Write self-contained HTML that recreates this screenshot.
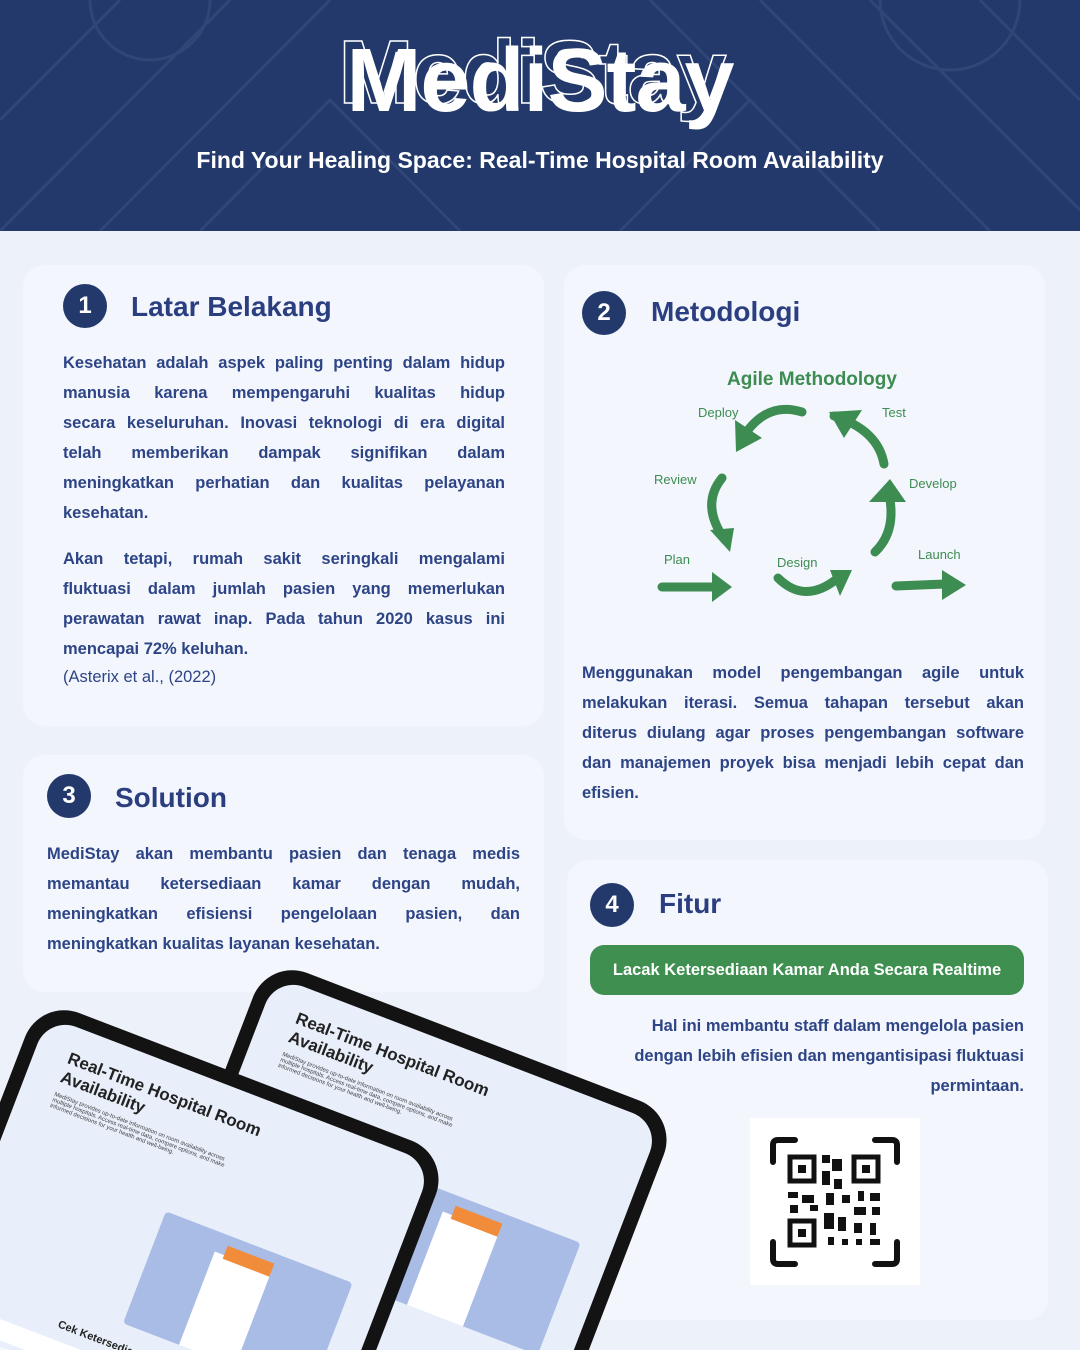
<!DOCTYPE html>
<html><head><meta charset="utf-8"><style>
*{margin:0;padding:0;box-sizing:border-box}
html,body{width:1080px;height:1350px;overflow:hidden}
body{background:#edf2fa;font-family:"Liberation Sans",sans-serif;color:#2b3f80}
#w{position:relative;width:1080px;height:1350px;overflow:hidden}
.hdr{position:absolute;left:0;top:0;width:1080px;height:231px;background:#23396b;overflow:hidden}
.title{position:absolute;left:0;width:1080px;text-align:center;top:30px;font-size:90px;font-weight:700;color:#fff;letter-spacing:-1px}
.title2{position:absolute;left:-8px;width:1080px;text-align:center;top:22px;font-size:90px;font-weight:700;color:transparent;-webkit-text-stroke:1.5px #fff;letter-spacing:-1px}
.sub{position:absolute;left:0;width:1080px;text-align:center;top:147px;font-size:23px;font-weight:700;color:#fff}
.card{position:absolute;background:#f3f6fc;border-radius:22px}
.num{position:absolute;width:44px;height:44px;border-radius:50%;background:#23396b;color:#fff;font-weight:700;font-size:24px;text-align:center;line-height:44px}
.h{position:absolute;font-size:28px;font-weight:700;color:#2b3f80}
.p{position:absolute;font-size:16.5px;line-height:30px;font-weight:700;color:#2d4486}
.p div{text-align:justify;text-align-last:justify;white-space:nowrap;word-spacing:0}
.p div.e{text-align-last:left}
.p.r div{text-align-last:right;text-align:right}
.tab{position:absolute;transform-origin:0 0;transform:rotate(21deg);width:440px;height:620px;background:#131313;border-radius:42px;padding:14px}
.scr{width:100%;height:100%;border-radius:30px;background:linear-gradient(#e9effa 0,#e9effa 55%,#f4f7fd 55%);overflow:hidden;position:relative}
</style></head><body><div id="w">
<div class="hdr">
<svg width="1080" height="231" style="position:absolute;left:0;top:0" fill="none" stroke="#2f4677" stroke-width="3">
<path d="M0 120 L120 0 M0 231 L230 0 M100 231 L330 0 M650 0 L880 231 M760 0 L990 231 M870 0 L1080 210 M980 0 L1080 100"/>
<path d="M200 231 L330 100 L460 231 M620 231 L750 100 L880 231"/>
<circle cx="150" cy="0" r="60"/><circle cx="950" cy="0" r="70"/>
</svg>
<div class="title2">MediStay</div>
<div class="title">MediStay</div>
<div class="sub">Find Your Healing Space: Real-Time Hospital Room Availability</div>
</div>

<div class="card" style="left:23px;top:265px;width:521px;height:461px"></div>
<div class="num" style="left:63px;top:284px">1</div>
<div class="h" style="left:131px;top:291px">Latar Belakang</div>
<div class="p" style="left:63px;top:348px;width:442px">
<div>Kesehatan adalah aspek paling penting dalam hidup</div>
<div>manusia karena mempengaruhi kualitas hidup</div>
<div>secara keseluruhan. Inovasi teknologi di era digital</div>
<div>telah memberikan dampak signifikan dalam</div>
<div>meningkatkan perhatian dan kualitas pelayanan</div>
<div class="e">kesehatan.</div></div>
<div class="p" style="left:63px;top:544px;width:442px">
<div>Akan tetapi, rumah sakit seringkali mengalami</div>
<div>fluktuasi dalam jumlah pasien yang memerlukan</div>
<div>perawatan rawat inap. Pada tahun 2020 kasus ini</div>
<div class="e">mencapai 72% keluhan.</div></div>
<div class="p" style="left:63px;top:662px;font-weight:400">(Asterix et al., (2022)</div>

<div class="card" style="left:564px;top:265px;width:481px;height:575px"></div>
<div class="num" style="left:582px;top:291px">2</div>
<div class="h" style="left:651px;top:296px">Metodologi</div>
<svg width="340" height="260" style="position:absolute;left:640px;top:360px" font-family="Liberation Sans" font-weight="700" fill="#3d8c52">
<text x="172" y="25" font-size="19" text-anchor="middle">Agile Methodology</text>
<g font-size="13" font-weight="400"><text x="58" y="57">Deploy</text><text x="242" y="57">Test</text><text x="14" y="124">Review</text><text x="269" y="128">Develop</text><text x="24" y="204">Plan</text><text x="137" y="207">Design</text><text x="278" y="199">Launch</text></g>
<g stroke="#3d8c52" stroke-width="9" fill="none" stroke-linecap="round">
<path d="M162 52 Q130 42 108 70"/><path d="M194 56 Q238 70 244 104"/><path d="M82 118 Q60 145 85 180"/><path d="M248 130 Q258 170 235 192"/><path d="M22 227 L75 227"/><path d="M138 218 Q165 245 198 218"/><path d="M256 226 L305 224"/>
</g>
<g fill="#3d8c52"><path d="M95 60 L122 78 L96 92Z"/><path d="M189 52 L222 50 L204 78Z"/><path d="M70 170 L94 168 L90 192Z"/><path d="M256 127 L235 150 L272 150Z" transform="translate(-6,-8)"/><path d="M72 212 L92 227 L72 242Z"/><path d="M190 210 L212 210 L200 236Z"/><path d="M302 210 L326 225 L302 240Z"/></g>
</svg>
<div class="p" style="left:582px;top:658px;width:442px">
<div>Menggunakan model pengembangan agile untuk</div>
<div>melakukan iterasi. Semua tahapan tersebut akan</div>
<div>diterus diulang agar proses pengembangan software</div>
<div>dan manajemen proyek bisa menjadi lebih cepat dan</div>
<div class="e">efisien.</div></div>

<div class="card" style="left:23px;top:755px;width:521px;height:237px"></div>
<div class="num" style="left:47px;top:774px">3</div>
<div class="h" style="left:115px;top:782px">Solution</div>
<div class="p" style="left:47px;top:839px;width:473px">
<div>MediStay akan membantu pasien dan tenaga medis</div>
<div>memantau ketersediaan kamar dengan mudah,</div>
<div>meningkatkan efisiensi pengelolaan pasien, dan</div>
<div class="e">meningkatkan kualitas layanan kesehatan.</div></div>

<div class="card" style="left:567px;top:860px;width:481px;height:460px"></div>
<div class="num" style="left:590px;top:883px">4</div>
<div class="h" style="left:659px;top:888px">Fitur</div>
<div style="position:absolute;left:590px;top:945px;width:434px;height:50px;border-radius:14px;background:#3f8f50;color:#fff;font-weight:700;font-size:16.5px;text-align:center;line-height:50px">Lacak Ketersediaan Kamar Anda Secara Realtime</div>
<div class="p r" style="left:600px;top:1011px;width:424px">
<div>Hal ini membantu staff dalam mengelola pasien</div>
<div>dengan lebih efisien dan mengantisipasi fluktuasi</div>
<div>permintaan.</div></div>
<div style="position:absolute;left:750px;top:1118px;width:170px;height:167px;background:#fff"></div>
<svg width="130" height="130" style="position:absolute;left:770px;top:1137px" fill="#111">
<g fill="none" stroke="#111" stroke-width="6" stroke-linecap="round"><path d="M3 25 V8 Q3 3 8 3 H25"/><path d="M105 3 H122 Q127 3 127 8 V25"/><path d="M3 105 V122 Q3 127 8 127 H25"/><path d="M127 105 V122 Q127 127 122 127 H105"/></g>
<g fill="none" stroke="#111" stroke-width="5"><rect x="20" y="20" width="24" height="24"/><rect x="84" y="20" width="24" height="24"/><rect x="20" y="84" width="24" height="24"/></g>
<rect x="28" y="28" width="8" height="8"/><rect x="92" y="28" width="8" height="8"/><rect x="28" y="92" width="8" height="8"/>
<rect x="52" y="18" width="8" height="8"/><rect x="62" y="22" width="10" height="12"/><rect x="52" y="34" width="8" height="14"/><rect x="64" y="42" width="8" height="10"/><rect x="18" y="55" width="10" height="6"/><rect x="32" y="58" width="12" height="8"/><rect x="20" y="68" width="8" height="8"/><rect x="40" y="68" width="8" height="6"/><rect x="56" y="56" width="8" height="12"/><rect x="72" y="58" width="8" height="8"/><rect x="88" y="54" width="6" height="10"/><rect x="100" y="56" width="10" height="8"/><rect x="84" y="70" width="12" height="8"/><rect x="102" y="70" width="8" height="8"/><rect x="54" y="76" width="10" height="16"/><rect x="68" y="80" width="8" height="14"/><rect x="84" y="86" width="8" height="10"/><rect x="100" y="86" width="6" height="12"/><rect x="58" y="100" width="6" height="8"/><rect x="72" y="102" width="6" height="6"/><rect x="86" y="102" width="6" height="6"/><rect x="100" y="102" width="10" height="6"/>
</svg>

<div class="tab" style="left:268px;top:958px"><div class="scr">
<div style="position:absolute;left:34px;top:22px;font-size:17px;font-weight:700;color:#222;line-height:20px">Real-Time Hospital Room<br>Availability</div>
<div style="position:absolute;left:34px;top:68px;width:200px;font-size:6px;color:#444">MediStay provides up-to-date information on room availability across multiple hospitals. Access real-time data, compare options, and make informed decisions for your health and well-being.</div>
<div style="position:absolute;left:180px;top:140px;width:200px;height:120px;background:#a9bce6;border-radius:4px"></div>
<div style="position:absolute;left:240px;top:160px;width:60px;height:100px;background:#fff"></div>
<div style="position:absolute;left:250px;top:150px;width:50px;height:14px;background:#f08c3a"></div>
<div style="position:absolute;left:290px;top:330px;width:34px;height:16px;background:#1e3a6e;border-radius:3px"></div>
</div></div>
<div class="tab" style="left:40px;top:998px"><div class="scr">
<div style="position:absolute;left:34px;top:22px;font-size:17px;font-weight:700;color:#222;line-height:20px">Real-Time Hospital Room<br>Availability</div>
<div style="position:absolute;left:34px;top:68px;width:200px;font-size:6px;color:#444">MediStay provides up-to-date information on room availability across multiple hospitals. Access real-time data, compare options, and make informed decisions for your health and well-being.</div>
<div style="position:absolute;left:180px;top:140px;width:200px;height:120px;background:#a9bce6;border-radius:4px"></div>
<div style="position:absolute;left:240px;top:160px;width:60px;height:100px;background:#fff"></div>
<div style="position:absolute;left:250px;top:150px;width:50px;height:14px;background:#f08c3a"></div>
<div style="position:absolute;left:120px;top:278px;font-size:11px;font-weight:700;color:#222">Cek Ketersediaan Kamar</div>
<div style="position:absolute;left:20px;top:300px;width:230px;height:20px;background:#fff;border-radius:3px"></div>
<div style="position:absolute;left:262px;top:300px;width:34px;height:16px;background:#1e3a6e;border-radius:3px"></div>
<div style="position:absolute;left:60px;top:350px;font-size:9px;font-weight:700;color:#222">INFORMASI KETERSEDIAAN</div>
</div></div>
</div></body></html>
